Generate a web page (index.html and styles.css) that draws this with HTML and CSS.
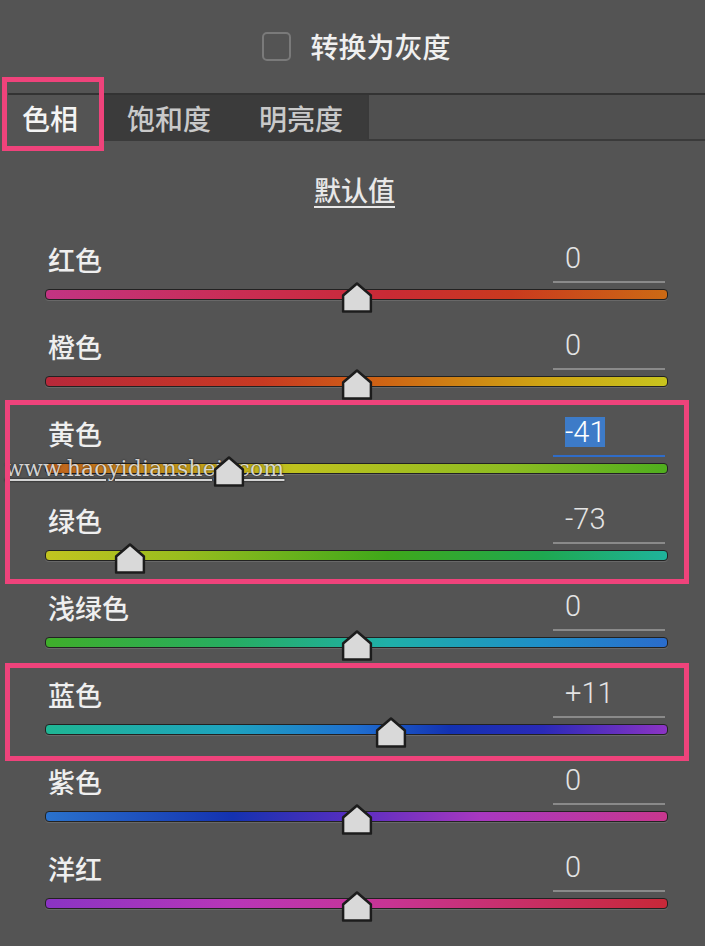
FILE: index.html
```html
<!DOCTYPE html>
<html lang="zh-CN">
<head>
    <meta charset="UTF-8">
    <meta name="viewport" content="width=device-width, initial-scale=1.0">
    <title>色相 / 饱和度 / 明亮度</title>
    <link rel="stylesheet" href="styles.css">
</head>
<body>
    <div class="panel">
        <!-- Grayscale toggle -->
        <div class="gray-toggle">
            <span class="checkbox"></span>
            <span class="gray-label">转换为灰度</span>
        </div>

        <!-- Tabs -->
        <div class="tabs">
            <div class="tab tab-active">色相</div>
            <div class="tab">饱和度</div>
            <div class="tab">明亮度</div>
            <div class="tab-fill"></div>
        </div>

        <div class="defaults"><span>默认值</span></div>

        <!-- Hue sliders -->
        <div class="sliders">
            <div class="slider-row">
                <div class="slider-head">
                    <span class="slider-name">红色</span>
                    <span class="slider-value"><span>0</span></span>
                </div>
                <div class="slider-track track-red">
                    <svg class="slider-thumb" style="left: 50%" viewBox="0 0 30 30"><polygon points="15,1.5 28.5,13 28.5,28.5 1.5,28.5 1.5,13"/></svg>
                </div>
            </div>
            <div class="slider-row">
                <div class="slider-head">
                    <span class="slider-name">橙色</span>
                    <span class="slider-value"><span>0</span></span>
                </div>
                <div class="slider-track track-orange">
                    <svg class="slider-thumb" style="left: 50%" viewBox="0 0 30 30"><polygon points="15,1.5 28.5,13 28.5,28.5 1.5,28.5 1.5,13"/></svg>
                </div>
            </div>
            <div class="slider-row">
                <div class="slider-head">
                    <span class="slider-name">黄色</span>
                    <span class="slider-value value-active"><span>-41</span></span>
                </div>
                <div class="slider-track track-yellow">
                    <svg class="slider-thumb" style="left: 29.5%" viewBox="0 0 30 30"><polygon points="15,1.5 28.5,13 28.5,28.5 1.5,28.5 1.5,13"/></svg>
                </div>
            </div>
            <div class="slider-row">
                <div class="slider-head">
                    <span class="slider-name">绿色</span>
                    <span class="slider-value"><span>-73</span></span>
                </div>
                <div class="slider-track track-green">
                    <svg class="slider-thumb" style="left: 13.5%" viewBox="0 0 30 30"><polygon points="15,1.5 28.5,13 28.5,28.5 1.5,28.5 1.5,13"/></svg>
                </div>
            </div>
            <div class="slider-row">
                <div class="slider-head">
                    <span class="slider-name">浅绿色</span>
                    <span class="slider-value"><span>0</span></span>
                </div>
                <div class="slider-track track-aqua">
                    <svg class="slider-thumb" style="left: 50%" viewBox="0 0 30 30"><polygon points="15,1.5 28.5,13 28.5,28.5 1.5,28.5 1.5,13"/></svg>
                </div>
            </div>
            <div class="slider-row">
                <div class="slider-head">
                    <span class="slider-name">蓝色</span>
                    <span class="slider-value"><span>+11</span></span>
                </div>
                <div class="slider-track track-blue">
                    <svg class="slider-thumb" style="left: 55.5%" viewBox="0 0 30 30"><polygon points="15,1.5 28.5,13 28.5,28.5 1.5,28.5 1.5,13"/></svg>
                </div>
            </div>
            <div class="slider-row">
                <div class="slider-head">
                    <span class="slider-name">紫色</span>
                    <span class="slider-value"><span>0</span></span>
                </div>
                <div class="slider-track track-purple">
                    <svg class="slider-thumb" style="left: 50%" viewBox="0 0 30 30"><polygon points="15,1.5 28.5,13 28.5,28.5 1.5,28.5 1.5,13"/></svg>
                </div>
            </div>
            <div class="slider-row">
                <div class="slider-head">
                    <span class="slider-name">洋红</span>
                    <span class="slider-value"><span>0</span></span>
                </div>
                <div class="slider-track track-magenta">
                    <svg class="slider-thumb" style="left: 50%" viewBox="0 0 30 30"><polygon points="15,1.5 28.5,13 28.5,28.5 1.5,28.5 1.5,13"/></svg>
                </div>
            </div>
        </div>
    </div>

    <!-- Highlight frames -->
    <div class="mark mark-tab"></div>
    <div class="mark mark-yellow-green"></div>
    <div class="mark mark-blue"></div>

    <div class="watermark">www.haoyidiansheji.com</div>
</body>
</html>
```

FILE: styles.css
```css
body {
    margin: 0;
    padding: 0;
    background-color: #545454;
    color: #eeeeee;
    font-family: 'Noto Sans CJK SC', 'Noto Sans', sans-serif;
    width: 705px;
    height: 946px;
    overflow: hidden;
    position: relative;
}

.panel {
    display: flex;
    flex-direction: column;
}

/* Grayscale toggle */
.gray-toggle {
    display: flex;
    justify-content: center;
    align-items: center;
    gap: 19px;
    margin-top: 31px;
    height: 30px;
    padding-left: 8px;
}

.checkbox {
    width: 29px;
    height: 29px;
    border: 2px solid #7a7a7a;
    border-radius: 5px;
    box-sizing: border-box;
}

.gray-label {
    font-size: 28px;
    font-weight: 500;
    line-height: 30px;
    color: #f0f0f0;
}

/* Tabs */
.tabs {
    display: flex;
    margin: 32px 0 0 8px;
    height: 48px;
    border-top: 2px solid #333333;
    box-sizing: border-box;
}

.tab {
    display: flex;
    align-items: center;
    padding: 0 24px;
    font-size: 28px;
    font-weight: 500;
    color: #c9c9c9;
    background-color: #3b3b3b;
}

.tab-active {
    padding: 0 25px 0 14px;
    color: #f4f4f4;
    background-color: #545454;
}

.tab-fill {
    flex: 1;
    background-color: #505050;
    border-left: 2px solid #3a3a3a;
    border-bottom: 2px solid #3a3a3a;
}

.defaults {
    display: flex;
    justify-content: center;
    margin-top: 28px;
    height: 40px;
    align-items: center;
    padding-left: 4px;
}

.defaults span {
    font-size: 27px;
    font-weight: 500;
    color: #e8e8e8;
    text-decoration: underline;
    text-underline-offset: 5px;
    text-decoration-thickness: 2px;
}

/* Slider rows */
.sliders {
    display: flex;
    flex-direction: column;
    margin-top: 26px;
}

.slider-row {
    display: flex;
    flex-direction: column;
    padding: 0 37px 22px 45px;
}

.slider-head {
    display: flex;
    justify-content: space-between;
    align-items: stretch;
    height: 48px;
}

.slider-name {
    display: flex;
    align-items: center;
    padding-left: 3px;
    font-size: 27px;
    font-weight: 500;
    color: #efefef;
}

.slider-value {
    display: flex;
    align-items: center;
    width: 112px;
    margin-right: 3px;
    padding-left: 12px;
    box-sizing: border-box;
    border-bottom: 2px solid #8a8a8a;
    font-family: 'Roboto', 'Liberation Sans', sans-serif;
    font-weight: 300;
    font-size: 29px;
    color: #e4e4e4;
}

.value-active {
    border-bottom-color: #2f6cc8;
}

.value-active span {
    background-color: #3d7bc8;
    color: #ffffff;
    line-height: 30px;
}

.slider-track {
    position: relative;
    margin-top: 6px;
    height: 11px;
    border: 1px solid #222222;
    border-radius: 4px;
    box-sizing: border-box;
    box-shadow: 0 1px 0 rgba(255, 255, 255, 0.12);
}

.slider-thumb {
    position: absolute;
    top: -8px;
    width: 31px;
    height: 31px;
    transform: translateX(-50%);
    z-index: 3;
}

.slider-thumb polygon {
    fill: #d9d9d9;
    stroke: #1c1c1c;
    stroke-width: 2.5;
    stroke-linejoin: round;
}

.track-red {
    background: linear-gradient(90deg, #c23483 0%, #c92d55 30%, #c92a35 55%, #c93a1e 75%, #cc6a14 100%);
}

.track-orange {
    background: linear-gradient(90deg, #b8283a 0%, #c83a22 35%, #cf6614 55%, #cfa414 80%, #c8c41e 100%);
}

.track-yellow {
    background: linear-gradient(90deg, #c0601c 0%, #c49a18 22%, #bfc21e 40%, #8cbc22 75%, #4fae1e 100%);
}

.track-green {
    background: linear-gradient(90deg, #c2c420 0%, #98bc1e 22%, #3fa81a 55%, #1ea850 80%, #1fb39c 100%);
}

.track-aqua {
    background: linear-gradient(90deg, #3fae2a 0%, #26ad62 30%, #1fb0a8 55%, #1f8ec8 80%, #2a6ccc 100%);
}

.track-blue {
    background: linear-gradient(90deg, #1fb694 0%, #1ea3c0 30%, #1f6fd0 50%, #1332b2 65%, #2a2ab8 80%, #8c34c4 100%);
}

.track-purple {
    background: linear-gradient(90deg, #2a72cc 0%, #1432b0 30%, #5a2ec0 50%, #a838c0 70%, #c8378e 100%);
}

.track-magenta {
    background: linear-gradient(90deg, #8a34c4 0%, #b836b8 30%, #c83494 55%, #c82e60 80%, #c82838 100%);
}

/* Highlight frames */
.mark {
    position: absolute;
    border: 5px solid #ef437b;
    box-sizing: border-box;
    z-index: 4;
}

.mark-tab {
    left: 2px;
    top: 77px;
    width: 102px;
    height: 74px;
}

.mark-yellow-green {
    left: 5px;
    top: 400px;
    width: 684px;
    height: 184px;
}

.mark-blue {
    left: 5px;
    top: 663px;
    width: 684px;
    height: 98px;
}

.watermark {
    position: absolute;
    left: 5px;
    top: 456px;
    font-family: 'DejaVu Serif', 'Liberation Serif', serif;
    font-size: 22px;
    letter-spacing: 0.2px;
    color: rgba(236, 236, 236, 0.88);
    text-decoration: underline;
    text-underline-offset: 3px;
    text-shadow: 0 0 2px rgba(0, 0, 0, 0.8);
    z-index: 2;
}
```
